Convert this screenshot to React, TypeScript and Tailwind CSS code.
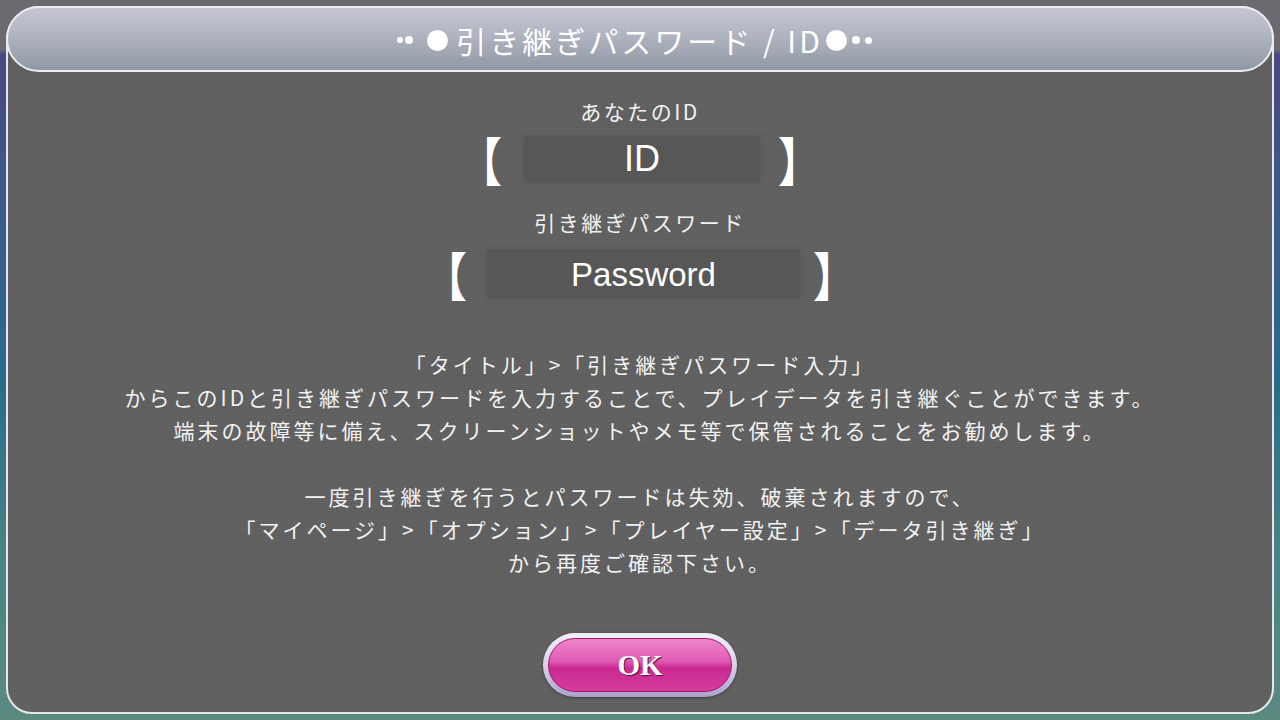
export default function App() {
  const jp = { fontFamily: '"Noto Sans CJK JP", "Noto Sans", sans-serif' }

  return (
    <div className="w-[1280px] h-[720px] px-[6px] pt-[6px] pb-[6px] bg-[linear-gradient(180deg,#6a6a70_0px,#6a6a70_50px,#4a4680_54px,#3c5a8c_200px,#2a6a88_380px,#4a8484_560px,#5a8a80_720px)]">
      <div
        className="h-full flex flex-col items-center border-2 border-[#e6e6ec] rounded-t-[34px] rounded-b-[26px] bg-[repeating-linear-gradient(0deg,#5e5e5e_0px,#5e5e5e_1px,#636363_1px,#636363_2px)] text-[#f2f2f2]"
        style={jp}
      >
        {/* header bar */}
        <div className="-mx-[2px] -mt-[2px] self-stretch h-[66px] rounded-full border-2 border-[#ececf2] bg-[linear-gradient(180deg,#c6c6d2_0%,#b0b3c0_45%,#8f99a4_100%)] flex items-center justify-center">
          <div className="flex items-center text-white text-[30px] tracking-[3px] leading-none -ml-[11px] mt-[2px]">
            <span className="w-[6px] h-[6px] rounded-full bg-white" />
            <span className="w-[8px] h-[8px] rounded-full bg-white ml-[2px]" />
            <span className="w-[21px] h-[21px] rounded-full bg-white ml-[14px] mr-[8px]" />
            <span>引き継ぎパスワード&nbsp;/&nbsp;ID</span>
            <span className="w-[21px] h-[21px] rounded-full bg-white ml-[3px]" />
            <span className="w-[8px] h-[8px] rounded-full bg-white ml-[5px]" />
            <span className="w-[7px] h-[7px] rounded-full bg-white ml-[5px]" />
          </div>
        </div>

        {/* ID */}
        <div className="mt-[23px] text-[21px] tracking-[2.5px] leading-[33px]">あなたのID</div>
        <div className="mt-[8px] flex items-center h-[46px]">
          <span className="text-[44px] leading-none text-white font-bold scale-y-[1.18] mr-[22px]">【</span>
          <div className="w-[236px] h-[46px] bg-[#575757] shadow-[0_0_4px_#575757] flex items-center justify-center text-white text-[36px] leading-none" style={{ fontFamily: '"Liberation Sans", Arial, sans-serif' }}>
            ID
          </div>
          <span className="text-[44px] leading-none text-white font-bold scale-y-[1.18] ml-[18px]">】</span>
        </div>

        {/* password */}
        <div className="mt-[24px] text-[21px] tracking-[2.5px] leading-[33px]">引き継ぎパスワード</div>
        <div className="mt-[11px] flex items-center h-[48px]">
          <span className="text-[44px] leading-none text-white font-bold scale-y-[1.18] mr-[20px]">【</span>
          <div className="w-[313px] h-[48px] bg-[#575757] shadow-[0_0_4px_#575757] flex items-center justify-center text-white text-[33px] leading-none" style={{ fontFamily: '"Liberation Sans", Arial, sans-serif' }}>
            Password
          </div>
          <span className="text-[44px] leading-none text-white font-bold scale-y-[1.18] ml-[13px]">】</span>
        </div>

        {/* notes */}
        <div className="mt-[50px] text-center text-[21px] tracking-[3px] leading-[33px]">
          <p>「タイトル」&gt;「引き継ぎパスワード入力」</p>
          <p>からこのIDと引き継ぎパスワードを入力することで、プレイデータを引き継ぐことができます。</p>
          <p>端末の故障等に備え、スクリーンショットやメモ等で保管されることをお勧めします。</p>
          <p>&nbsp;</p>
          <p>一度引き継ぎを行うとパスワードは失効、破棄されますので、</p>
          <p>「マイページ」&gt;「オプション」&gt;「プレイヤー設定」&gt;「データ引き継ぎ」</p>
          <p>から再度ご確認下さい。</p>
        </div>

        {/* OK button */}
        <button className="mt-[54px] w-[194px] h-[64px] rounded-full p-[5px] bg-[linear-gradient(180deg,#f4f0fa_0%,#d6d0ea_50%,#a9a2cc_100%)] shadow-[0_1px_3px_rgba(0,0,0,0.4)]">
          <div className="h-full rounded-full border border-[#a3186e] bg-[linear-gradient(180deg,#ee86cc_0%,#e05cb4_42%,#c92a90_56%,#d43c9c_100%)] flex items-center justify-center">
            <span className="text-white text-[29px] font-bold leading-none [text-shadow:1px_1px_1px_#5a0a44]" style={{ fontFamily: '"Liberation Serif", "Times New Roman", serif' }}>
              OK
            </span>
          </div>
        </button>
      </div>
    </div>
  )
}
